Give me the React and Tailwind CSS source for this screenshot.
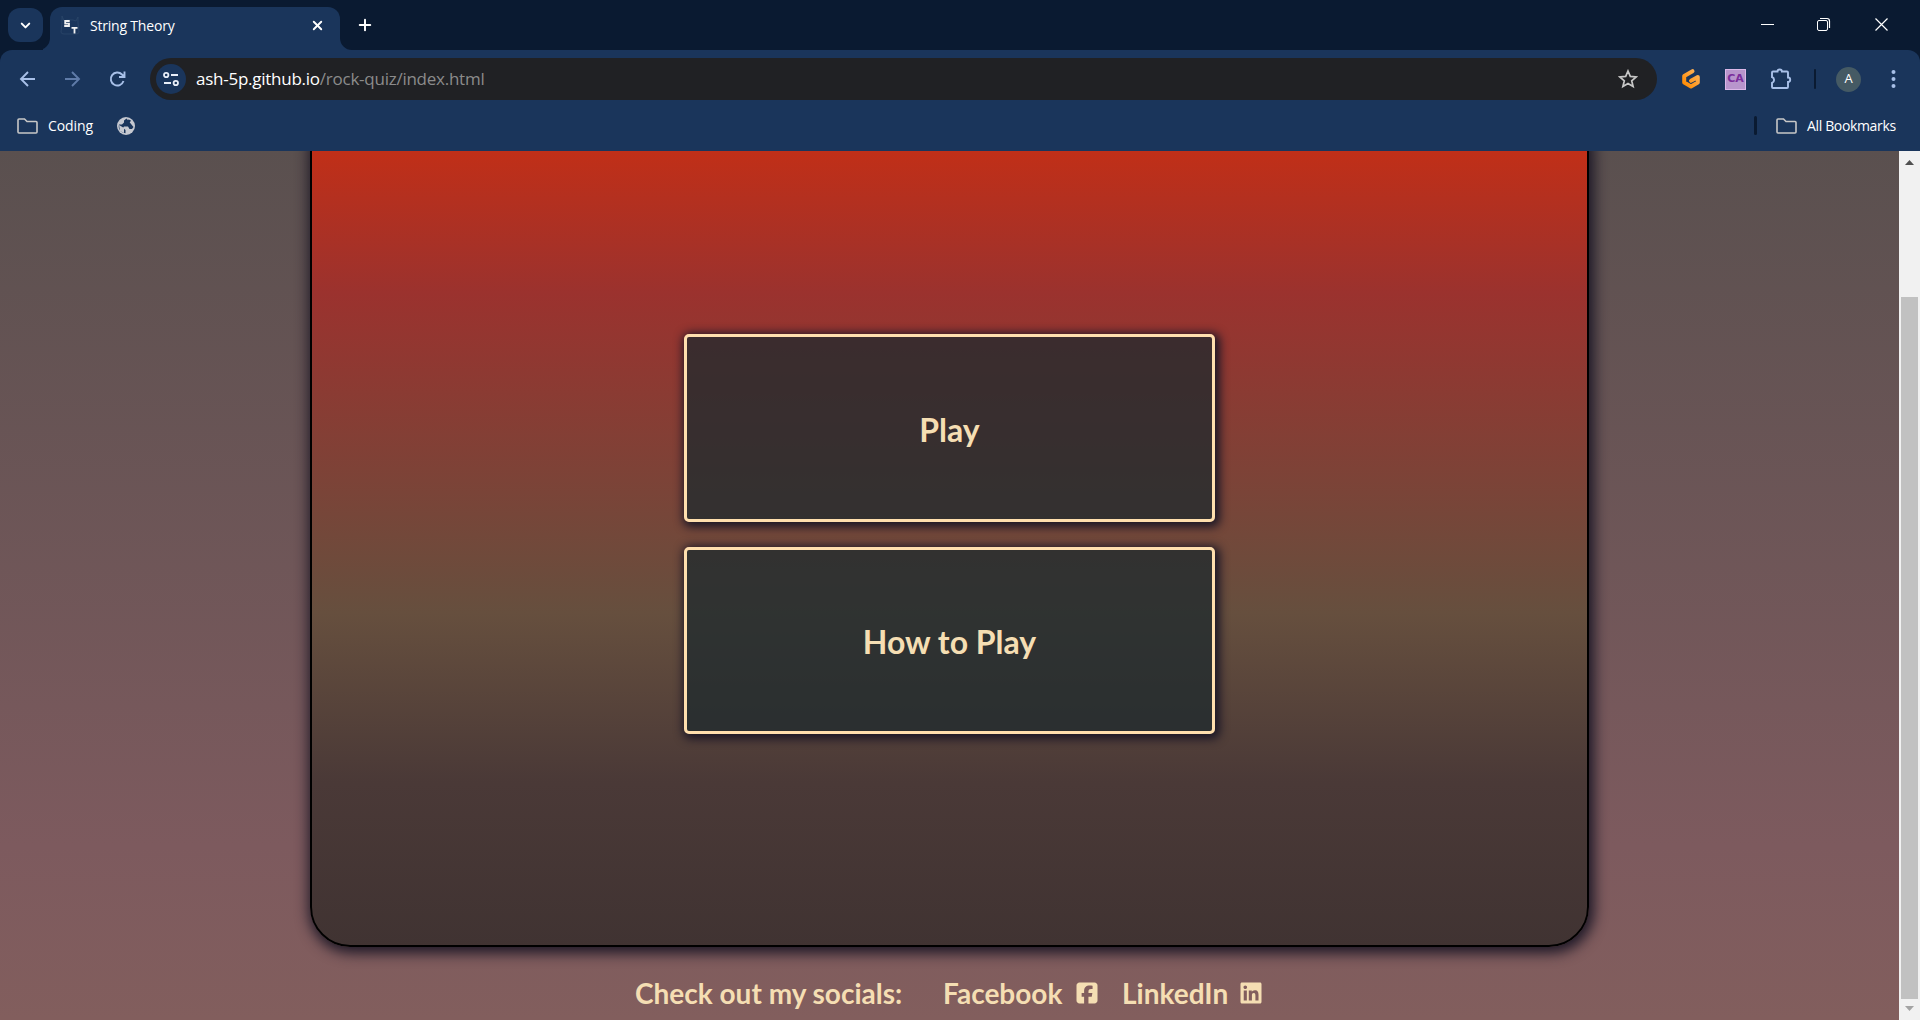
import React from "react";
import { ChevronDown, X, Plus } from "lucide-react";
import { FaSquareFacebook, FaLinkedin } from "react-icons/fa6";

const Svg = ({ className, children, ...p }) => (
  <svg className={"shrink-0 " + className} fill="none" {...p}>
    {children}
  </svg>
);

function TabStrip() {
  return (
    <header className="flex h-[50px] bg-[#0a1a31]">
      <div className="ml-2 mt-2 flex h-[34px] w-[35px] shrink-0 items-center justify-center rounded-xl bg-[#1a355b]">
        <ChevronDown size={15} strokeWidth={3.2} className="text-white" />
      </div>
      <div className="flex w-[7px] shrink-0 items-end overflow-hidden">
        <Svg className="-ml-[5px] h-3 w-3" viewBox="0 0 12 12">
          <path d="M12 0v12H0A12 12 0 0 0 12 0Z" fill="#1a355b" />
        </Svg>
      </div>
      <div className="mt-[7px] flex h-[43px] w-[290px] shrink-0 rounded-t-xl bg-[#1a355b]">
        <Svg className="ml-[10px] mt-2 h-5 w-5" viewBox="0 0 20 20">
          <path d="M2 1l2 5 3-1h6l3 1 2-4v6l1 9q0 2-3 2H4q-3 0-3-2l1-9Z" stroke="#2c4669" strokeWidth=".8" />
          <path d="M9.7 6H5.2v2.7H9V11H4.2M11.5 12.800h6M14.500 13v5.500" stroke="#f2f2f2" strokeWidth="1.800" />
        </Svg>
        <span className="ml-[10px] mt-[9px] w-[220px] font-['Open_Sans'] text-[14px] leading-5 tracking-[-0.2px] text-white">
          String Theory
        </span>
        <X size={15} strokeWidth={3} className="mr-[13px] mt-[11px] shrink-0 text-white" />
      </div>
      <div className="flex w-3 shrink-0 items-end">
        <Svg className="h-3 w-3" viewBox="0 0 12 12">
          <path d="M0 0v12h12A12 12 0 0 1 0 0Z" fill="#1a355b" />
        </Svg>
      </div>
      <Plus size={18} strokeWidth={2.600} className="ml-[4px] mt-4 shrink-0 text-white" />
      <div className="flex-1" />
      <Svg className="mr-6 mt-[17px] h-4 w-[135px]" viewBox="0 0 135 16" stroke="#fff">
        <path d="M0 7.500h13" />
        <rect x="56.500" y="3.500" width="10" height="10" rx="1.500" />
        <path d="M59 1.500h7q2.500 0 2.500 2.500v7M114.500 1.500l12 12M126.500 1.500l-12 12" strokeWidth="1.200" />
      </Svg>
    </header>
  );
}

function Toolbar() {
  return (
    <div className="bg-[#0a1a31]">
      <div className="flex h-[58px] items-center rounded-t-xl bg-[#1a355b]">
        <Svg className="ml-[18px] h-5 w-[110px]" viewBox="0 0 110 20" strokeWidth="1.900">
          <path d="M17 10H3M10 3L3 10l7 7" stroke="#a8c0e8" />
          <path d="M47 10h14M54 3l7 7-7 7" stroke="#5f7ba8" />
          <path d="M105.500 12a6.500 6.500 0 1 1-1.500-6.500l2.500 2.500M106.500 2.500V8H101" stroke="#a8c0e8" />
        </Svg>
        <div className="ml-[22px] flex h-[42px] w-[1507px] shrink-0 items-center rounded-full bg-[#202124]">
          <div className="ml-[6px] flex h-[30px] w-[30px] items-center justify-center rounded-full bg-[#1a355b]">
            <Svg className="h-4 w-4" viewBox="0 0 16 16" stroke="#e8eef8" strokeWidth="1.800">
              <circle cx="3.200" cy="4" r="2.200" />
              <path d="M8 4h7M1 12h7" />
              <circle cx="12.800" cy="12" r="2.200" />
            </Svg>
          </div>
          <span className="ml-[10px] whitespace-pre font-['Open_Sans'] text-[17px] leading-6 tracking-[-0.25px] text-[#8b8b8b]">
            <span className="text-white">ash-5p.github.io</span>/rock-quiz/index.html
          </span>
          <div className="flex-1" />
          <Svg className="mr-[19px] h-5 w-5" viewBox="0 0 20 20">
            <path d="M10 2l2.300 5.400 5.900.5-4.500 3.900 1.400 5.700-5.100-3.100-5.100 3.100 1.400-5.700-4.500-3.900 5.900-.5Z" stroke="#c7c7c7" strokeWidth="1.700" />
          </Svg>
        </div>
        <Svg className="ml-[24px] h-[22px] w-5" viewBox="0 0 20 22">
          <defs>
            <linearGradient id="orange" x1="1" y1="0" x2="0" y2="1">
              <stop stopColor="#ffb45b" />
              <stop offset="1" stopColor="#ff8a00" />
            </linearGradient>
          </defs>
          <path d="M11.500 3.200L3.200 8v6.500l6.800 4 6.800-4V9L10 12.800" stroke="url(#orange)" strokeWidth="4" strokeLinecap="round" strokeLinejoin="round" />
        </Svg>
        <span className="ml-[24px] flex h-[21px] w-[21px] shrink-0 items-center justify-center border border-[#dcb8e8] bg-[#b895cc] font-['DejaVu_Sans'] text-[11px] font-bold text-[#7b2d9b]">
          CA
        </span>
        <Svg className="ml-[24px] h-[22px] w-[22px]" viewBox="0 0 22 22">
          <path d="M2 4.500q0-1 1-1h4.500a2.200 2 0 0 1 4.400 0H17q1 0 1 1v5a2.200 2.200 0 0 1 0 4.400V19q0 1-1 1H3q-1 0-1-1v-4a3.200 3.200 0 0 0 0-6Z" stroke="#a8c0e8" strokeWidth="1.900" />
        </Svg>
        <span className="ml-[22px] h-5 w-[2px] shrink-0 rounded bg-[#0a1a31]" />
        <span className="ml-5 flex h-[25px] w-[25px] shrink-0 items-center justify-center rounded-full bg-[#455a64] font-['Open_Sans'] text-[13px] text-white">
          A
        </span>
        <Svg className="ml-[30px] h-5 w-[5px]" viewBox="0 0 5 20" fill="#a8c0e8">
          <circle cx="2.500" cy="3" r="2" fill="#a8c0e8" />
          <circle cx="2.500" cy="10" r="2" fill="#a8c0e8" />
          <circle cx="2.500" cy="17" r="2" fill="#a8c0e8" />
        </Svg>
      </div>
    </div>
  );
}

const Folder = ({ className }) => (
  <Svg className={"h-4 w-[21px] " + className} viewBox="0 0 21 16">
    <path d="M2 1h5.500l2.500 2.500h9q1 0 1 1V14q0 1-1 1H2q-1 0-1-1V2q0-1 1-1Z" stroke="#c7c7c7" strokeWidth="1.600" />
  </Svg>
);

function Bookmarks() {
  return (
    <div className="flex h-[43px] items-start bg-[#1a355b] font-['Open_Sans'] text-[14px] leading-5 text-white">
      <Folder className="ml-[17px] mt-[10px]" />
      <span className="ml-[10px] mt-2 w-[69px] tracking-[-0.1px]">Coding</span>
      <Svg className="mt-[9px] h-[18px] w-[18px]" viewBox="0 0 18 18">
        <circle cx="9" cy="9" r="9" fill="#c5c8d0" />
        <path d="M9.500 1.500L7 3.500v2L5 7.500H2Q1 11 3.500 14q2 2 5 2.200V13L6 11l1-1.500h4l1.500 2.500H15l1.500-2M9.500 1.500l2 1L10 5l2.500 1 1.500-2.500" fill="#1a355b" />
        <path d="M2 8l5 3v5L3 14Z" fill="#c5c8d0" />
      </Svg>
      <div className="flex-1" />
      <span className="mt-2 h-[19px] w-[3px] rounded bg-[#0a1a31]" />
      <Folder className="ml-[19px] mt-[10px]" />
      <span className="ml-[10px] mr-[17px] mt-2 w-[96px] whitespace-nowrap tracking-[-0.35px]">All Bookmarks</span>
    </div>
  );
}

const Button = ({ children }) => (
  <button className="flex h-[187.500px] w-[531px] items-center justify-center rounded-[5px] border-[3px] border-[#ffdfae] bg-[#1d2a2d]/75 pt-1 text-[32px] font-bold leading-10 shadow-[2px_2px_10px_3px_#1b1726]">
    {children}
  </button>
);

function Quiz() {
  return (
    <main className="flex h-full flex-1 flex-col items-center overflow-hidden bg-linear-to-b from-[#5a504f] via-[#7d5a5e] via-80% to-[#825e5d] font-['Lato'] text-[#f5deb3]">
      <section className="-mt-10 flex h-[836px] w-[1279px] shrink-0 flex-col items-center gap-[25px] rounded-[40px] border-2 border-black bg-[linear-gradient(to_bottom,#c02f18_40px,#9b322e_180px,#664f3e_500px,#4a3937_670px,#403332_834px)] pt-[221px] shadow-[2px_3px_14px_3px_#1b1726]">
        <Button>Play</Button>
        <Button>How to Play</Button>
      </section>
      <footer className="flex w-[1279px] items-center pl-[325px] pt-7 text-[28px] font-bold leading-9">
        <span className="w-[308px] whitespace-nowrap">Check out my socials:</span>
        <span className="w-[132px]">Facebook</span>
        <FaSquareFacebook size={24} className="w-6" />
        <span className="ml-[23px] w-[117px]">LinkedIn</span>
        <FaLinkedin size={24} />
      </footer>
    </main>
  );
}

function Scrollbar() {
  return (
    <aside className="flex w-[21px] shrink-0 flex-col items-center bg-[#f1f1f1]">
      <Svg className="mt-[9px] h-[5px] w-[9px]" viewBox="0 0 9 5">
        <path d="M0 5L4.500 0 9 5Z" fill="#505050" />
      </Svg>
      <div className="mt-[132px] h-[702px] w-[17px] bg-[#c1c1c1]" />
      <Svg className="mt-[7px] h-[5px] w-[9px]" viewBox="0 0 9 5">
        <path d="M0 0l4.500 5L9 0Z" fill="#a3a3a3" />
      </Svg>
    </aside>
  );
}

export default function App() {
  return (
    <div className="flex h-[1020px] w-[1920px] flex-col overflow-hidden">
      <TabStrip />
      <Toolbar />
      <Bookmarks />
      <div className="flex min-h-0 flex-1">
        <Quiz />
        <Scrollbar />
      </div>
    </div>
  );
}
